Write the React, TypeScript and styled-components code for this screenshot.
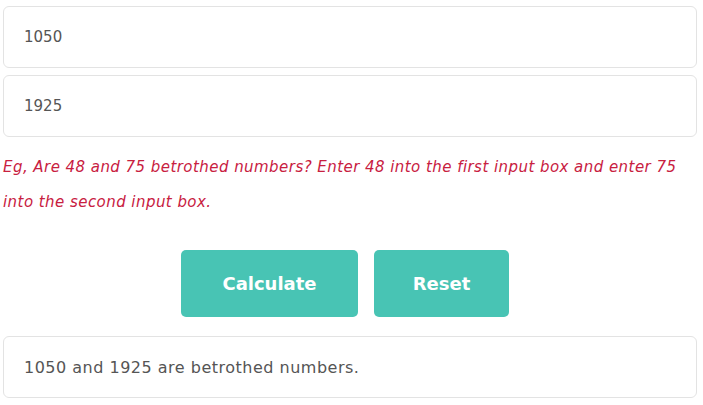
import React, { useState } from "react";
import styled, { createGlobalStyle } from "styled-components";

const GlobalStyle = createGlobalStyle`
  body {
    margin: 0;
    background: #fff;
    font-family: "DejaVu Sans", "Open Sans", sans-serif;
  }
`;

const App = () => {
  const [first, setFirst] = useState("1050");
  const [second, setSecond] = useState("1925");

  return (
    <>
      <GlobalStyle />
      <Page>
        <Field value={first} onChange={(e) => setFirst(e.target.value)} />
        <Field value={second} onChange={(e) => setSecond(e.target.value)} />
        <Hint>
          Eg, Are 48 and 75 betrothed numbers? Enter 48 into the first input box
          and enter 75 into the second input box.
        </Hint>
        <ButtonRow>
          <ActionButton $width={177}>Calculate</ActionButton>
          <ActionButton $width={135}>Reset</ActionButton>
        </ButtonRow>
        <Result>1050 and 1925 are betrothed numbers.</Result>
      </Page>
    </>
  );
};

const Page = styled.div`
  display: flex;
  flex-direction: column;
  width: 694px;
  padding: 6px 0 0 3px;
`;

const Field = styled.input`
  box-sizing: border-box;
  height: 62px;
  margin-bottom: 7px;
  padding: 0 20px;
  border: 1px solid #e3e3e3;
  border-radius: 6px;
  font-family: inherit;
  font-size: 15px;
  color: #555;
  outline: none;
`;

const Hint = styled.p`
  margin: 6px 0 0;
  font-size: 15px;
  font-style: italic;
  line-height: 35px;
  letter-spacing: 0.45px;
  color: #c8203f;
`;

const ButtonRow = styled.div`
  display: flex;
  justify-content: center;
  gap: 16px;
  margin: 30px 0 19px;
  padding-right: 10px;
`;

const ActionButton = styled.button<{ $width: number }>`
  width: ${(p) => p.$width}px;
  height: 67px;
  border: none;
  border-radius: 5px;
  background: #48c4b4;
  color: #fff;
  font-family: inherit;
  font-size: 18px;
  font-weight: 700;
  cursor: pointer;
`;

const Result = styled.div`
  box-sizing: border-box;
  height: 62px;
  display: flex;
  align-items: center;
  padding: 0 20px;
  border: 1px solid #e3e3e3;
  border-radius: 6px;
  font-size: 16px;
  letter-spacing: 0.5px;
  color: #555;
`;

export default App;
